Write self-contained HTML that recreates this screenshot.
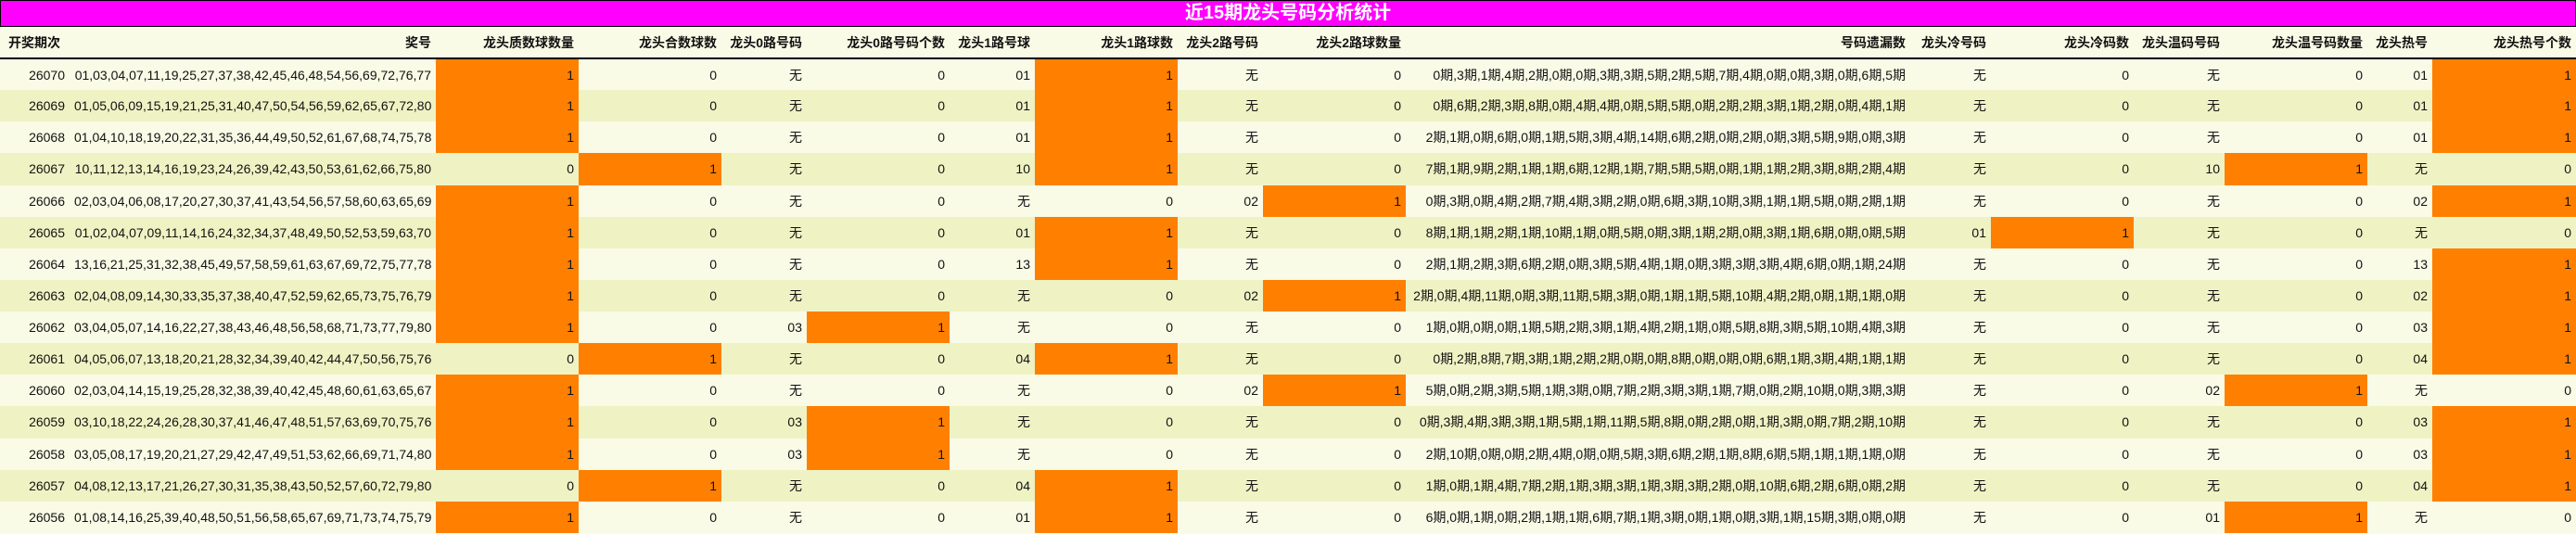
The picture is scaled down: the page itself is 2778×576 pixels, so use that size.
<!DOCTYPE html>
<html><head><meta charset="utf-8"><style>
*{margin:0;padding:0;box-sizing:border-box}
body{width:2778px;height:576px;overflow:hidden;background:#f9fbe6;font-family:"Liberation Sans","Noto Sans CJK SC",sans-serif;font-size:14px;color:#111}
.title{height:29px;background:#ff00ff;border:1px solid #000;color:#fff;font-weight:bold;font-size:20px;text-align:center;line-height:27px}
table{border-collapse:collapse;table-layout:fixed;width:2778px}
td,th{padding:0 5px;text-align:right;white-space:nowrap;overflow:hidden}
th{height:34px;font-weight:bold;background:#f9fbe6;border-bottom:2px solid #000}
td{height:34.13px}
tr.a td{background:#f9fbe6}
tr.b td{background:#eff3c4}
td.o{background:#ff8000 !important}
</style></head><body>
<div class="title">近15期龙头号码分析统计</div>
<table>
<colgroup>
<col style="width:75px"><col style="width:395px"><col style="width:154px"><col style="width:154px"><col style="width:92px"><col style="width:154px"><col style="width:92px"><col style="width:154px"><col style="width:92px"><col style="width:154px"><col style="width:544px"><col style="width:87px"><col style="width:154px"><col style="width:98px"><col style="width:154px"><col style="width:70px"><col style="width:155px">
</colgroup>
<tr><th style="text-align:left;padding-left:9px">开奖期次</th><th>奖号</th><th>龙头质数球数量</th><th>龙头合数球数</th><th>龙头0路号码</th><th>龙头0路号码个数</th><th>龙头1路号球</th><th>龙头1路球数</th><th>龙头2路号码</th><th>龙头2路球数量</th><th>号码遗漏数</th><th>龙头冷号码</th><th>龙头冷码数</th><th>龙头温码号码</th><th>龙头温号码数量</th><th>龙头热号</th><th>龙头热号个数</th></tr>
<tr class="a"><td>26070</td><td>01,03,04,07,11,19,25,27,37,38,42,45,46,48,54,56,69,72,76,77</td><td class="o">1</td><td>0</td><td>无</td><td>0</td><td>01</td><td class="o">1</td><td>无</td><td>0</td><td>0期,3期,1期,4期,2期,0期,0期,3期,3期,5期,2期,5期,7期,4期,0期,0期,3期,0期,6期,5期</td><td>无</td><td>0</td><td>无</td><td>0</td><td>01</td><td class="o">1</td></tr>
<tr class="b"><td>26069</td><td>01,05,06,09,15,19,21,25,31,40,47,50,54,56,59,62,65,67,72,80</td><td class="o">1</td><td>0</td><td>无</td><td>0</td><td>01</td><td class="o">1</td><td>无</td><td>0</td><td>0期,6期,2期,3期,8期,0期,4期,4期,0期,5期,5期,0期,2期,2期,3期,1期,2期,0期,4期,1期</td><td>无</td><td>0</td><td>无</td><td>0</td><td>01</td><td class="o">1</td></tr>
<tr class="a"><td>26068</td><td>01,04,10,18,19,20,22,31,35,36,44,49,50,52,61,67,68,74,75,78</td><td class="o">1</td><td>0</td><td>无</td><td>0</td><td>01</td><td class="o">1</td><td>无</td><td>0</td><td>2期,1期,0期,6期,0期,1期,5期,3期,4期,14期,6期,2期,0期,2期,0期,3期,5期,9期,0期,3期</td><td>无</td><td>0</td><td>无</td><td>0</td><td>01</td><td class="o">1</td></tr>
<tr class="b"><td>26067</td><td>10,11,12,13,14,16,19,23,24,26,39,42,43,50,53,61,62,66,75,80</td><td>0</td><td class="o">1</td><td>无</td><td>0</td><td>10</td><td class="o">1</td><td>无</td><td>0</td><td>7期,1期,9期,2期,1期,1期,6期,12期,1期,7期,5期,5期,0期,1期,1期,2期,3期,8期,2期,4期</td><td>无</td><td>0</td><td>10</td><td class="o">1</td><td>无</td><td>0</td></tr>
<tr class="a"><td>26066</td><td>02,03,04,06,08,17,20,27,30,37,41,43,54,56,57,58,60,63,65,69</td><td class="o">1</td><td>0</td><td>无</td><td>0</td><td>无</td><td>0</td><td>02</td><td class="o">1</td><td>0期,3期,0期,4期,2期,7期,4期,3期,2期,0期,6期,3期,10期,3期,1期,1期,5期,0期,2期,1期</td><td>无</td><td>0</td><td>无</td><td>0</td><td>02</td><td class="o">1</td></tr>
<tr class="b"><td>26065</td><td>01,02,04,07,09,11,14,16,24,32,34,37,48,49,50,52,53,59,63,70</td><td class="o">1</td><td>0</td><td>无</td><td>0</td><td>01</td><td class="o">1</td><td>无</td><td>0</td><td>8期,1期,1期,2期,1期,10期,1期,0期,5期,0期,3期,1期,2期,0期,3期,1期,6期,0期,0期,5期</td><td>01</td><td class="o">1</td><td>无</td><td>0</td><td>无</td><td>0</td></tr>
<tr class="a"><td>26064</td><td>13,16,21,25,31,32,38,45,49,57,58,59,61,63,67,69,72,75,77,78</td><td class="o">1</td><td>0</td><td>无</td><td>0</td><td>13</td><td class="o">1</td><td>无</td><td>0</td><td>2期,1期,2期,3期,6期,2期,0期,3期,5期,4期,1期,0期,3期,3期,3期,4期,6期,0期,1期,24期</td><td>无</td><td>0</td><td>无</td><td>0</td><td>13</td><td class="o">1</td></tr>
<tr class="b"><td>26063</td><td>02,04,08,09,14,30,33,35,37,38,40,47,52,59,62,65,73,75,76,79</td><td class="o">1</td><td>0</td><td>无</td><td>0</td><td>无</td><td>0</td><td>02</td><td class="o">1</td><td>2期,0期,4期,11期,0期,3期,11期,5期,3期,0期,1期,1期,5期,10期,4期,2期,0期,1期,1期,0期</td><td>无</td><td>0</td><td>无</td><td>0</td><td>02</td><td class="o">1</td></tr>
<tr class="a"><td>26062</td><td>03,04,05,07,14,16,22,27,38,43,46,48,56,58,68,71,73,77,79,80</td><td class="o">1</td><td>0</td><td>03</td><td class="o">1</td><td>无</td><td>0</td><td>无</td><td>0</td><td>1期,0期,0期,0期,1期,5期,2期,3期,1期,4期,2期,1期,0期,5期,8期,3期,5期,10期,4期,3期</td><td>无</td><td>0</td><td>无</td><td>0</td><td>03</td><td class="o">1</td></tr>
<tr class="b"><td>26061</td><td>04,05,06,07,13,18,20,21,28,32,34,39,40,42,44,47,50,56,75,76</td><td>0</td><td class="o">1</td><td>无</td><td>0</td><td>04</td><td class="o">1</td><td>无</td><td>0</td><td>0期,2期,8期,7期,3期,1期,2期,2期,0期,0期,8期,0期,0期,0期,6期,1期,3期,4期,1期,1期</td><td>无</td><td>0</td><td>无</td><td>0</td><td>04</td><td class="o">1</td></tr>
<tr class="a"><td>26060</td><td>02,03,04,14,15,19,25,28,32,38,39,40,42,45,48,60,61,63,65,67</td><td class="o">1</td><td>0</td><td>无</td><td>0</td><td>无</td><td>0</td><td>02</td><td class="o">1</td><td>5期,0期,2期,3期,5期,1期,3期,0期,7期,2期,3期,3期,1期,7期,0期,2期,10期,0期,3期,3期</td><td>无</td><td>0</td><td>02</td><td class="o">1</td><td>无</td><td>0</td></tr>
<tr class="b"><td>26059</td><td>03,10,18,22,24,26,28,30,37,41,46,47,48,51,57,63,69,70,75,76</td><td class="o">1</td><td>0</td><td>03</td><td class="o">1</td><td>无</td><td>0</td><td>无</td><td>0</td><td>0期,3期,4期,3期,3期,1期,5期,1期,11期,5期,8期,0期,2期,0期,1期,3期,0期,7期,2期,10期</td><td>无</td><td>0</td><td>无</td><td>0</td><td>03</td><td class="o">1</td></tr>
<tr class="a"><td>26058</td><td>03,05,08,17,19,20,21,27,29,42,47,49,51,53,62,66,69,71,74,80</td><td class="o">1</td><td>0</td><td>03</td><td class="o">1</td><td>无</td><td>0</td><td>无</td><td>0</td><td>2期,10期,0期,0期,2期,4期,0期,0期,5期,3期,6期,2期,1期,8期,6期,5期,1期,1期,1期,0期</td><td>无</td><td>0</td><td>无</td><td>0</td><td>03</td><td class="o">1</td></tr>
<tr class="b"><td>26057</td><td>04,08,12,13,17,21,26,27,30,31,35,38,43,50,52,57,60,72,79,80</td><td>0</td><td class="o">1</td><td>无</td><td>0</td><td>04</td><td class="o">1</td><td>无</td><td>0</td><td>1期,0期,1期,4期,7期,2期,1期,3期,3期,1期,3期,3期,2期,0期,10期,6期,2期,6期,0期,2期</td><td>无</td><td>0</td><td>无</td><td>0</td><td>04</td><td class="o">1</td></tr>
<tr class="a"><td>26056</td><td>01,08,14,16,25,39,40,48,50,51,56,58,65,67,69,71,73,74,75,79</td><td class="o">1</td><td>0</td><td>无</td><td>0</td><td>01</td><td class="o">1</td><td>无</td><td>0</td><td>6期,0期,1期,0期,2期,1期,1期,6期,7期,1期,3期,0期,1期,0期,3期,1期,15期,3期,0期,0期</td><td>无</td><td>0</td><td>01</td><td class="o">1</td><td>无</td><td>0</td></tr>
</table>
</body></html>
